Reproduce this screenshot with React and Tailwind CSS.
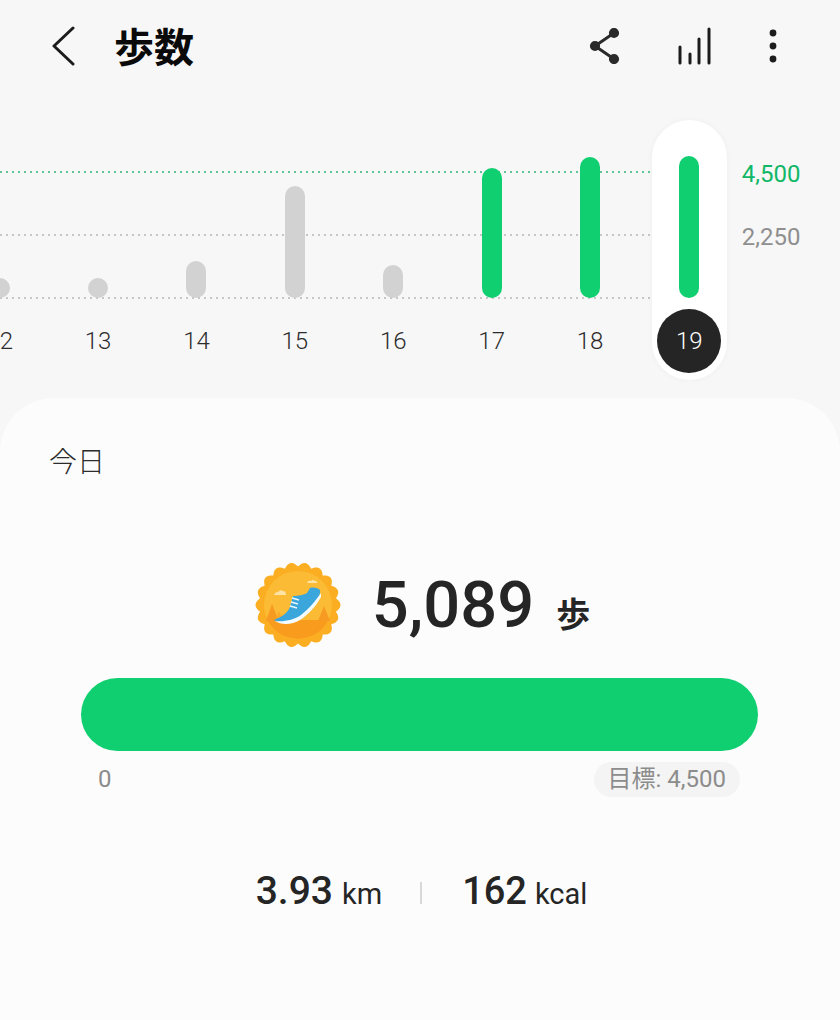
import React from "react";

const sans = "font-['Roboto','Noto_Sans_CJK_JP',sans-serif]";

const days = [
  { label: "12", height: 20 },
  { label: "13", height: 20 },
  { label: "14", height: 37 },
  { label: "15", height: 112 },
  { label: "16", height: 33 },
  { label: "17", height: 130, hit: true },
  { label: "18", height: 141, hit: true },
];

// scalloped edge of the badge: round tips, sharp valleys
function scallopPath(cx, cy, r, bumps, depth) {
  let d = "";
  const steps = bumps * 12;
  for (let i = 0; i <= steps; i++) {
    const a = (i / steps) * Math.PI * 2;
    const rr = r + depth * Math.abs(Math.cos((a * bumps) / 2));
    const x = cx + rr * Math.cos(a);
    const y = cy + rr * Math.sin(a);
    d += `${i === 0 ? "M" : "L"}${x.toFixed(1)} ${y.toFixed(1)}`;
  }
  return d + "Z";
}

function Badge() {
  return (
    <svg width="88" height="88" viewBox="0 0 88 88" className="shrink-0">
      <path d={scallopPath(44, 44, 38.5, 18, 4)} fill="#fbae22" />
      <circle cx="44" cy="44" r="34" fill="#fcbb35" />
      <path d="M13.5 59 H74.5 A34 34 0 0 1 13.5 59Z" fill="#f99b1c" />
      <path d="M18 43 L12 60 L25 60Z" fill="#f79a22" />
      <path d="M25 50 L21 60 L30 60Z" fill="#f9a82a" />
      <path d="M70 45 L64 60 L76 60Z" fill="#f79a22" />
      <path d="M20 34 q1 -3 4 -3 q2 -3 5 -1 q3 0 3 4 Z" fill="#fde3a6" />
      <path d="M53 22 q1 -3 4 -2 q2 -2 4 0 q3 0 2 2 Z" fill="#fde3a6" />
      <path d="M20 59 C27 56 33 53 36 46 L39 35 C44 35 50 34 53 32 L56 27 C60 26 64 27 66 29 C67 35 60 45 53 52 C47 58 40 61 32 61 C27 61 23 61 20 59Z" fill="#3aa6dc" />
      <path d="M21 60 C30 61 40 59 47 54 C55 48 62 39 67 32 L67 36 C62 45 54 54 46 59 C38 64 27 64 21 60Z" fill="#f4fbff" />
      <path d="M36 45 L43 47 M37 41 L44 43 M38 37 L45 39" stroke="#eaf7fd" strokeWidth="1.6" />
    </svg>
  );
}

function Bar({ height, color }) {
  return <div className={`w-[20px] rounded-full ${color}`} style={{ height }} />;
}

function DayColumn({ day }) {
  return (
    <div className="w-[98.4px] shrink-0 flex flex-col items-center">
      <div className="h-[178px] flex items-end">
        <Bar height={day.height} color={day.hit ? "bg-[#10cf71]" : "bg-[#d2d2d2]"} />
      </div>
      <div className="h-[86px] flex items-center justify-center text-[24px] font-light text-[#2c2c2c]">
        {day.label}
      </div>
    </div>
  );
}

function GridLine({ top, color }) {
  return (
    <div
      className={`absolute left-0 w-[652px] h-[2px] ${color}`}
      style={{ top }}
    />
  );
}

export default function App() {
  return (
    <div className={`w-[840px] h-[1020px] overflow-hidden bg-[#f7f7f7] flex flex-col ${sans}`}>
      {/* Header */}
      <div className="h-[92px] shrink-0 flex items-center pl-[50px]">
        <svg width="26" height="40" viewBox="0 0 26 40" fill="none" stroke="#1c1c1c" strokeWidth="3" strokeLinecap="round" strokeLinejoin="round">
          <path d="M23 2 L4 20 L23 38" />
        </svg>
        <div className="ml-[38px] mt-[6px] text-[40px] leading-none font-bold text-[#0a0a0a]">歩数</div>
        <svg className="ml-auto" width="36" height="36" viewBox="0 0 36 36" fill="#2a2a2a" stroke="#2a2a2a" strokeWidth="3">
          <path d="M25 5 L6 18 L25 31" fill="none" />
          <circle cx="25" cy="5" r="3.6" />
          <circle cx="6" cy="18" r="3.6" />
          <circle cx="25" cy="31" r="3.6" />
        </svg>
        <svg className="ml-[52px]" width="36" height="38" viewBox="0 0 36 38" fill="none" stroke="#1c1c1c" strokeWidth="3" strokeLinecap="round">
          <path d="M3 20 V36 M13 27 V36 M22 12 V36 M32 2 V36" />
        </svg>
        <svg className="ml-[56px] mr-[63px]" width="8" height="36" viewBox="0 0 8 36" fill="#1c1c1c">
          <circle cx="4" cy="5" r="3.4" />
          <circle cx="4" cy="18" r="3.4" />
          <circle cx="4" cy="31" r="3.4" />
        </svg>
      </div>

      {/* Chart */}
      <div className="relative h-[306px] shrink-0 pt-[28px]">
        <GridLine top={79} color="bg-[repeating-linear-gradient(90deg,#63c49a_0_2px,transparent_2px_6px)]" />
        <GridLine top={142} color="bg-[repeating-linear-gradient(90deg,#c6c6c6_0_2px,transparent_2px_6px)]" />
        <GridLine top={205} color="bg-[repeating-linear-gradient(90deg,#c6c6c6_0_2px,transparent_2px_6px)]" />
        <div className="relative flex -ml-[49.5px]">
          {days.map((day) => (
            <DayColumn key={day.label} day={day} />
          ))}
          <div className="ml-[12.5px] w-[75px] h-[260px] shrink-0 rounded-full bg-white shadow-[0_0_6px_rgba(0,0,0,0.04)] flex flex-col items-center">
            <div className="h-[178px] flex items-end">
              <Bar height={142} color="bg-[#10cf71]" />
            </div>
            <div className="mt-[11px] w-[64px] h-[64px] rounded-full bg-[#252525] text-white text-[24px] font-light flex items-center justify-center">
              19
            </div>
          </div>
          <div className="ml-[15px] pt-[39px] flex flex-col gap-[33px] text-[24px] leading-[30px]">
            <div className="text-[#10b766]">4,500</div>
            <div className="text-[#8f8f8f]">2,250</div>
          </div>
        </div>
      </div>

      {/* Today card */}
      <div className="flex-1 rounded-t-[54px] bg-[#fcfcfc] pt-[46px]">
        <div className="pl-[49px] text-[28px] leading-[38px] font-light text-[#2c2c2c]">今日</div>

        <div className="mt-[79px] pl-[4px] flex items-center justify-center h-[88px] text-[#252525]">
          <Badge />
          <div className="ml-[30px] text-[65px] leading-none font-medium">5,089</div>
          <div className="ml-[22px] mt-[20px] text-[34px] leading-none font-bold">歩</div>
        </div>

        <div className="mt-[29px] ml-[81px] w-[677px] h-[73px] rounded-full bg-[#10cf71]" />

        <div className="mt-[10px] ml-[98px] w-[642px] flex items-center justify-between text-[24px] text-[#8c8c8c]">
          <div>0</div>
          <div className="h-[35px] px-[14px] rounded-full bg-[#f4f4f4] flex items-center">目標: 4,500</div>
        </div>

        <div className="mt-[71px] pl-[3px] flex items-baseline justify-center text-[#252525]">
          <div className="text-[39px] leading-[46px] font-medium">3.93</div>
          <div className="ml-[9px] text-[29px] leading-[46px]">km</div>
          <div className="ml-[38px] mr-[40px] w-[2px] h-[22px] self-center bg-[#d8d8d8]" />
          <div className="text-[38px] leading-[46px] font-medium">162</div>
          <div className="ml-[8px] text-[29px] leading-[46px]">kcal</div>
        </div>
      </div>
    </div>
  );
}
